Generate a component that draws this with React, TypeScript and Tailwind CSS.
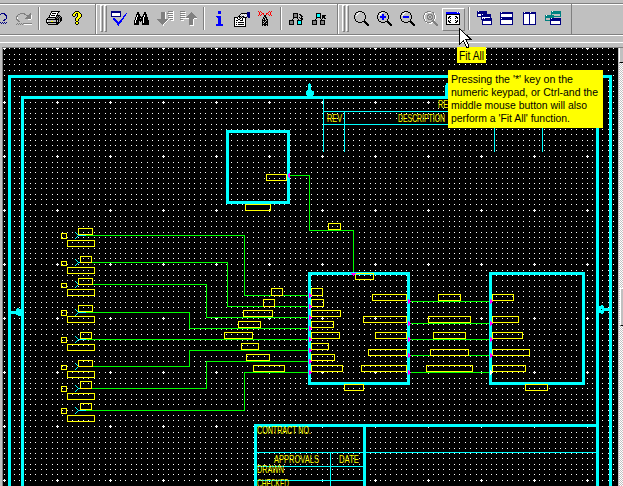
import React from "react";

type Box = [number, number, number, number];

const colours: Record<string, string> = {
  k: "#000000", w: "#ffffff", y: "#ffff00", g: "#808080", b: "#0000ff",
  n: "#000080", r: "#ff0000", c: "#00ffff", t: "#008080", s: "#c0c0c0",
};

function Pixels({ rows, x, y }: { rows: string[]; x: number; y: number }) {
  return (
    <>
      {rows.flatMap((row, j) =>
        [...row].map((p, i) =>
          p === "." ? null : <rect key={`${i}-${j}`} x={x + i} y={y + j} width="1" height="1" fill={colours[p]} />
        )
      )}
    </>
  );
}

function Icon({ rows, x, y, label, raised }: { rows: string[]; x: number; y: number; label: string; raised?: boolean }) {
  return (
    <button
      aria-label={label}
      className={
        raised
          ? "block h-[23px] w-[23px] shrink-0 border border-t-white border-l-white border-r-[#808080] border-b-[#808080]"
          : "block h-[23px] w-[23px] shrink-0"
      }
    >
      <svg className={raised ? "-m-px block h-[23px] w-[23px]" : "block h-[23px] w-[23px]"} viewBox="0 0 23 23" shapeRendering="crispEdges">
        <Pixels rows={rows} x={x} y={y} />
      </svg>
    </button>
  );
}

const undo = [
  "....nnnn..", "..nn...nn.", ".n......nn", ".........n", ".........n", ".........n", ".......nn.",
  "......nn..", "..........", ".n.n.n.n.n", "n.n.n.n.n.",
];
const redo = [
  "....ggggg.....g.", "..gg....gg...gg.", ".g........gggggw", "gg.........ggggw", "gw........gggggw", "gw.......ggggggw",
  "gg..........www.", ".gg.............", "..gg............", "................", ".g.g.g.ggggggggg", "g.g.g.g.wwwwwwww",
];
const printer = [
  ".....kkkkkkkkk..", ".....kwwwwwwk...", "....kwkkkkwk....", "....kwwwwwwk....", "...kwkkkkwkkkk..",
  "...kwwwwwwkgkgk.", "..kkkkkkkkgkgkgk", ".kssssssskkgkgkk", "kkkkkkkkkkkkkgkk", "kwsssssssskskgkk",
  "kwsssyysssksksk.", "kkkkkkkkkkkkkk..", ".ksssssssskkk...", "..kkkkkkkkkk....",
];
const question = [
  "...kkkk...", "..kyyyyk..", ".kyykkyyk.", "kyyk.kyyyk", "kyyk.kyyyk", ".kk..kyyyk", "....kyyyk.",
  "...kyyyk..", "...kyyk...", "...kyyk...", "....kk....", "...kyyk...", "...kyyk...", "....kk....",
];
const check = [
  "nnnnnnnnnn......", "nnnnnnnnnn......", "nwwwwwwwwn.....b", "nwwwwwwwwn....b.", "nwwwwwwwwn...bb.", "nnnnnnnnnn..bb..",
  "............b...", "..bb.......bb...", "..bbb.....bb....", "...bbb...bb.....", "....bbb.bbb.....", ".....bbbbb......",
  "......bbb.......", "......bb........", ".......b........",
];
const binoculars = [
  "...kk.....kk...", "...kk.....kk...", "..kkkk...kkkk..", "..kwkk...kwkk..", "..kwkkk.kkwkk..", ".kwkkkkkkwkkkk.",
  ".kwkkkskkwkkkk.", ".kwkkkkkkwkkkk.", "kwkkkkkkkwkkkkk", "kwkkk.k.kwkkkkk", "kwkkk...kwkkkkk", "kkkkk...kkkkkkk", "kkkkk...kkkkkkk",
];
const down = [
  "...........gggggw", "....ggggw...wwwww", "....ggggw.ggggggw", "....ggggw..wwwwww", "....ggggw..gggggw", "....ggggw...wwwww",
  "....ggggw..gggggw", "....ggggw...wwwww", "gggggggggggw.gggw", ".gggggggggw...www", "..gggggggw.......", "...gggggw........",
  "....gggw.........", ".....gw..........", "......w..........",
];
const up = [
  "ggggg............", ".wwwww.....g.....", "ggggg.....ggg....", ".wwwww...ggggg...", "ggggg...ggggggg..", ".wwwww.ggggggggg.",
  "ggggg.ggggggggggg", ".wwwwwwwwgggggwww", "ggg......ggggw...", ".www.....ggggw...", ".........ggggw...", ".........ggggw...",
  ".........ggggw...", ".........ggggw...", "..........wwww...",
];
const info = [
  "..bbb..", "..bbb..", "..bbb..", ".......", ".......", "bbbbb..", ".bbbb..", "..bbb..", "..bbb..", "..bbb..",
  "..bbb..", "..bbb..", "..bbb..", "bbbbbbb", "bbbbbbb",
];
const note = [
  ".............nnn", ".......kkkkkknnn", "......kw.w.w.nnn", ".....kw.w.w.wnnn", "....kkk.kk.w.nnn", "kkkkwk.k.kkkk.nn",
  "kwwkw.kwkwwk....", "kwwwkkwwkwwk....", "kwkkwwkkkwwk....", "kwwwwwwwwwwk....", "kwkwkkkkkkwk....", "kwwwwwwwwwwk....",
  "kwkwkkkkkkwk....", "kwwwwwwwwwwk....", "kkkkkkkkkkkk....",
];
const antenna = [
  "r.r........r.r", ".r.r......r.r.", ".r..rr..rr..r.", ".r.r.r..r.r.r.", "r.r...kk...r.r", "......kk......", ".....kskk.....",
  ".....kksk.....", "....kskskk....", "....kkkksk....", "....kskskk....", "....kkskkk....", "....kskksk....", "....kkkkkk....", "....k.kk.k....",
];
const treeDown = [
  "....kkkkk.....", "....kgggk.kk..", "....kgggk..kk.", "....kgggk...kk", "....kkkkk.k.k.", "....k...k..kkk", "...k.....k..kk",
  "kkkkk...kkkkk.", "kgggk...kccck.", "kgggk...kccck.", "kgggk...kccck.", "kkkkk...kkkkk.",
];
const treeUp = [
  "....kkkkk.....", "....kccck.....", "....kccck.kkkk", "....kccck.kkk.", "....kkkkk.kkk.", "....k...k.k.kk", "...k.....k....",
  "kkkkk...kkkkk.", "kgggk...kgggk.", "kgggk...kgggk.", "kgggk...kgggk.", "kkkkk...kkkkk.",
];
const lens = [
  "....kkkk.......", "..kk.w..kk.....", ".k.ww.....k....", ".k.w......k....", "k.w........k...", "k..........k...",
  "k..........k...", "k..........k...", ".k........k....", ".k........k....", "..kk....kkkk...", "....kkkk..kkk..",
  "...........kkk.", "............kkk", ".............kk",
];
function lensWith(mark: "plus" | "minus"): string[] {
  return lens.map((row, j) =>
    [...row].map((p, i) => {
      const bar = (j === 5 || j === 6) && i > 2 && i < 9;
      const stem = mark === "plus" && (i === 5 || i === 6) && j > 2 && j < 9;
      return bar || stem ? "b" : p;
    }).join("")
  );
}
const grayLens = [
  "....gggg.......", "..gg.www.gg....", ".gww......gw...", ".gw..gggg.gw...", "gw..gg..gg.gw..", "gw..g.gg.g.gw..",
  "gw..g.gg.g.gw..", "gw..gg..gg.gw..", ".gw..gggg.gw...", ".gw......ggw...", "..gg....gggg...", "...wggggwwggg..",
  "......www..ggg.", "............ggg", ".............gg",
];
const fit = [
  "bbbbbbbbbbbwbw", "bbbbbbbbbbbbbb", "kkkkkkkkkkkkkk", "kwwwwwwwwwwwwk", "kwwkkwwwwkkwwk", "kwkkwwwwwwkkwk", "kwkwkwwwwkwkwk",
  "kwwwwwwwwwwwwk", "kwkwkwwwwkwkwk", "kwkkwwwwwwkkwk", "kwwkkwwwwkkwwk", "kwwwwwwwwwwwwk", "kkkkkkkkkkkkkk",
];
const cascade = [
  "nwnnnnnnnn.....", "nnnnnnnnnn.....", "nnnnnnnnnn.....", "nwwwnwnnnnnnnn.", "nwwwnnnnnnnnnn.", "nnnnnnnnnnnnnn.",
  "....nwwwwwwwwn.", "....nwnwnnnnnnn", "....nnnnnnnnnnn", ".....nnnnnnnnnn", ".....nwwwwwwwwn", ".....nwwwwwwwwn", ".....nwwwwwwwwn", ".....nnnnnnnnnn",
];
const rowsIcon = [
  "nwnnnnnnnnnnn", "nnnnnnnnnnnnn", "nwwwwwwwwwwwn", "nwwwwwwwwwwwn", "nwwwwwwwwwwwn", "nnnnnnnnnnnnn",
  "nwnnnnnnnnnnn", "nnnnnnnnnnnnn", "nwwwwwwwwwwwn", "nwwwwwwwwwwwn", "nwwwwwwwwwwwn", "nwwwwwwwwwwwn", "nnnnnnnnnnnnn",
];
const colsIcon = [
  "nwnnnnnwnnnnn", "nnnnnnnnnnnnn", ...Array<string>(10).fill("nwwwwwnwwwwwn"), "nnnnnnnnnnnnn",
];
const swap = [
  "......twtttttttt", "......tttttttttt", "......tttttttttt", "......t........t", "twttttttt......t", "tttttttttttttttt",
  "ttttttttt.......", "t....nwnnnnnnnnn", "t....nnnnnnnnnnn", "tttttnnnnnnnnnnn", ".....nwwwwwwwwwn", ".....nwwwwwwwwwn", ".....nwwwwwwwwwn", ".....nnnnnnnnnnn",
];

function Divider() {
  return <div className="mx-[3px] mb-px h-[23px] w-[2px] shrink-0 border-l border-l-[#808080] bg-white" />;
}

function Grip() {
  return (
    <div className="flex h-[30px] w-3 shrink-0 gap-px border-l border-l-white pt-px pl-[3px]">
      {[0, 1].map((i) => (
        <div key={i} className="h-[27px] w-[3px] border border-t-white border-l-white border-r-[#808080] border-b-[#808080]" />
      ))}
    </div>
  );
}

function Toolbar() {
  return (
    <header className="h-[47px] shrink-0 bg-[#c0c0c0] pt-[3px]">
      <div className="flex h-8 items-center border-t border-b border-t-[#808080] border-b-[#808080] shadow-[inset_0_1px_0_#fff,0_1px_0_#fff]">
        <div className="flex h-[30px] w-[96px] shrink-0 items-center overflow-hidden border-r border-r-[#808080]">
          <div className="-ml-[11px] flex shrink-0 items-center">
            <Icon label="Undo" rows={undo} x={8} y={5} />
            <Icon label="Redo" rows={redo} x={4} y={5} />
            <Divider />
            <Icon label="Print" rows={printer} x={3} y={3} />
            <Icon label="Help" rows={question} x={6} y={3} />
          </div>
        </div>
        <div className="flex h-[30px] w-[242px] shrink-0 items-center border-r border-r-[#808080]">
          <Grip />
          <Icon label="Check" rows={check} x={3} y={3} />
          <Icon label="Find" rows={binoculars} x={3} y={4} />
          <Icon label="Push down" rows={down} x={3} y={3} />
          <Icon label="Pop up" rows={up} x={3} y={3} />
          <Divider />
          <Icon label="Information" rows={info} x={8} y={3} />
          <Icon label="Properties" rows={note} x={3} y={4} />
          <Icon label="Probe" rows={antenna} x={4} y={3} />
          <Divider />
          <Icon label="Descend" rows={treeDown} x={4} y={5} />
          <Icon label="Ascend" rows={treeUp} x={4} y={5} />
        </div>
        <div className="flex h-[30px] w-[234px] shrink-0 items-center border-r border-r-[#808080]">
          <Grip />
          <Icon label="Zoom" rows={lens} x={4} y={3} />
          <Icon label="Zoom in" rows={lensWith("plus")} x={4} y={3} />
          <Icon label="Zoom out" rows={lensWith("minus")} x={4} y={3} />
          <Icon label="Zoom selected" rows={grayLens} x={4} y={3} />
          <Icon label="Fit all" rows={fit} x={4} y={4} raised />
          <Divider />
          <Icon label="Cascade" rows={cascade} x={4} y={3} />
          <Icon label="Tile rows" rows={rowsIcon} x={4} y={4} />
          <Icon label="Tile columns" rows={colsIcon} x={4} y={4} />
          <Icon label="Swap windows" rows={swap} x={3} y={3} />
        </div>
      </div>
      <div className="mt-[7px] h-px bg-white" />
    </header>
  );
}

/* Each box is left, top, right, bottom; the right and bottom edges are exclusive. */
const labels: Box[] = [
  [266, 174, 287, 181], [245, 204, 271, 211], [328, 223, 341, 230],
  [271, 288, 283, 296], [263, 299, 275, 307], [243, 310, 273, 317], [238, 321, 261, 328],
  [224, 332, 253, 339], [241, 343, 259, 350], [246, 354, 270, 361], [253, 365, 285, 372],
  [311, 288, 323, 296], [311, 299, 324, 307], [311, 310, 341, 317], [311, 321, 334, 328],
  [311, 332, 340, 339], [311, 343, 329, 350], [311, 354, 335, 361], [311, 365, 343, 372],
  [355, 273, 374, 280], [344, 384, 364, 391],
  [372, 294, 407, 301], [363, 316, 407, 323], [375, 332, 407, 339], [368, 349, 407, 356], [361, 365, 407, 372],
  [438, 294, 461, 301], [428, 316, 471, 323], [433, 332, 466, 339], [430, 349, 469, 356], [426, 365, 473, 372],
  [492, 294, 514, 301], [492, 316, 519, 323], [492, 332, 523, 339], [492, 349, 530, 356], [492, 365, 526, 372],
  [525, 384, 548, 391],
];

/* y of the connector, wide upper tag, top and bottom of the tag, the pin square and the lower tag */
const connectors: [number, boolean, number, number, number, number, number][] = [
  [235, true, 228, 235, 233, 239, 240], [262, false, 256, 263, 261, 266, 267],
  [284, true, 278, 285, 283, 288, 289], [312, true, 305, 312, 310, 316, 316],
  [339, false, 332, 339, 337, 343, 344], [366, true, 360, 367, 365, 370, 371],
  [388, false, 381, 389, 386, 392, 393], [410, false, 403, 410, 408, 414, 415],
];
const bends = [244, 227, 206, 189, 0, 189, 206, 244];
const pinRows = [295, 306, 317, 328, 339, 350, 361, 372];
const busRows = [301, 323, 339, 355, 372];
const dotX = [0, 5, 10, 15, 21, 26, 31, 37, 42, 48];
const dotY = [0, 6, 11, 16, 22, 27, 32, 38, 43, 48];

function Outline({ box: [l, t, r, b], w = 1, stroke = "#ffff00" }: { box: Box; w?: number; stroke?: string }) {
  return <rect x={l + w / 2} y={t + w / 2} width={r - l - w} height={b - t - w} fill="none" stroke={stroke} strokeWidth={w} />;
}

function Label({ x, y, w, children }: { x: number; y: number; w: number; children: string }) {
  return (
    <text x={x} y={y} textLength={w} lengthAdjust="spacingAndGlyphs" fill="#ffff00" fontSize="10.5" fontFamily="'Liberation Sans', sans-serif">
      {children}
    </text>
  );
}

function Schematic() {
  return (
    <svg className="block h-[438px] w-[615px] shrink-0 bg-black" viewBox="3 48 615 438" shapeRendering="crispEdges">
      <defs>
        <pattern id="grid" x="3" y="47" width="53" height="54" patternUnits="userSpaceOnUse">
          {dotY.flatMap((dy) => dotX.map((dx) => <rect key={`${dx}-${dy}`} x={dx + 1} y={dy + 1} width="1" height="1" fill="#fff" />))}
          <path d="M0 1h3v1h-3zM1 0h1v3h-1z" fill="#fff" />
        </pattern>
      </defs>
      <rect x="3" y="48" width="615" height="438" fill="url(#grid)" />

      <g fill="none" stroke="#00ffff">
        <path strokeWidth="3" d="M9.5 486V76.5H610.5V486M22.5 486V97.5H597.5V486M255.5 486V425.5H597M364.5 425V486" />
        <path d="M323.5 98V152M344.5 111V152M494.5 111V152M542.5 111V152M323 111.5H597M323 124.5H597M257 452.5H597M257 466.5H364M257 480.5H364M330.5 452V486" />
      </g>
      <g fill="#00ffff">
        <path d="M309 83h1v1h1v6h1v1h2v4h-1v1h-2v1h-3v-1h-1v-1h-1v-4h1v-1h1v-6h1z" />
        <path d="M446 83h3v13h-3zM445 85h1v11h-1z" />
        <path d="M11 311h5v-2h1v-1h2v1h2v7h-3v-1h-2v-1h-5z" />
        <path d="M599 306h2v-1h2v1h1v2h6v3h-6v2h-1v1h-2v-1h-2z" />
      </g>
      <rect x="601" y="309" width="1" height="1" fill="#000" />

      <g fill="none" stroke="#00ff00">
        <path d="M290 175.5H309.5V230.5H353.5V274" />
        {connectors.map(([y], i) => (
          <path key={y} d={bends[i] ? `M85 ${y + 0.5}H${bends[i] + 0.5}V${pinRows[i] + 0.5}H309` : `M85 ${y + 0.5}H309`} />
        ))}
        {busRows.map((y) => <path key={y} d={`M410 ${y + 0.5}H490`} />)}
      </g>

      {connectors.map(([y, wide, top, bottom, s1, s2, low]) => (
        <g key={y}>
          <path fill="#00ffff" d={`M75 ${y - 3}h1v1h1v1h1v1h8v1h-8v1h-1v1h-1v1h-1v-1h1v-1h1v-1h1v-1h-1v-1h-1v-1h-1z`} />
          <Outline box={[wide ? 78 : 80, top, wide ? 93 : 92, bottom]} />
          <Outline box={[61, s1, 67, s2]} />
          <Outline box={[67, low, 95, low + 7]} />
        </g>
      ))}

      <Outline box={[226, 130, 290, 204]} w={3} stroke="#00ffff" />
      <Outline box={[308, 272, 410, 385]} w={3} stroke="#00ffff" />
      <Outline box={[489, 272, 585, 385]} w={3} stroke="#00ffff" />
      {labels.map((box) => <Outline key={box.join()} box={box} />)}

      <g fill="#ff00ff">
        {pinRows.map((y) => <path key={y} d={`M309 ${y - 2}h1v1h1v1h1v1h-1v1h-1v1h-1z`} />)}
        {busRows.map((y) => <path key={y} d={`M408 ${y - 2}h1v1h1v1h1v1h-1v1h-1v1h-1z`} />)}
        {busRows.map((y) => <path key={y} fill={y === 372 ? "#fff" : "#ff00ff"} d={`M490 ${y - 2}h1v1h1v1h1v1h-1v1h-1v1h-1z`} />)}
        <path d="M351 273h5v1h-1v1h-1v1h-1v-1h-1v-1h-1zM288 174h1v-1h1v5h-1v-1h-1z" />
      </g>

      <Label x={327} y={122} w={15}>REV</Label>
      <Label x={398} y={122} w={47}>DESCRIPTION</Label>
      <Label x={438} y={108} w={10}>RE</Label>
      <Label x={257} y={434} w={54}>CONTRACT  NO.</Label>
      <Label x={274} y={463} w={45}>APPROVALS</Label>
      <Label x={339} y={463} w={20}>DATE</Label>
      <Label x={257} y={473} w={27}>DRAWN</Label>
      <Label x={257} y={487} w={32}>CHECKED</Label>
    </svg>
  );
}

function Scrollbar() {
  return (
    <div className="flex h-full w-[5px] flex-col border-l border-l-[#c0c0c0] bg-[repeating-conic-gradient(#c0c0c0_0_25%,#fff_0_50%)] bg-[length:2px_2px]">
      <div className="h-[15px] border-b border-l border-b-black border-l-white bg-[#c0c0c0]" />
      <div className="mt-[225px] ml-px h-[38px] border-t border-b border-l border-t-white border-b-black border-l-white bg-[#c0c0c0]" />
    </div>
  );
}

const tip = [
  { text: "Pressing the '*' key on the", w: 122 },
  { text: "numeric keypad, or Ctrl-and the", w: 147 },
  { text: "middle mouse button will also", w: 136 },
  { text: "perform a 'Fit All' function.", w: 119 },
];

export default function App() {
  return (
    <div className="relative flex h-[486px] w-[623px] flex-col overflow-hidden bg-[#c0c0c0] font-['Liberation_Sans',sans-serif]">
      <Toolbar />
      <main className="ml-[2px] flex h-[439px] border-t border-l border-t-[#808080] border-l-[#808080]">
        <Schematic />
        <Scrollbar />
      </main>

      <div className="absolute top-[47px] left-[457px] h-4 w-[29px] bg-[#ffff00] pl-[2px]">
        <svg className="block h-4 w-[26px]" viewBox="0 0 26 16">
          <text x="0" y="13" fontSize="12" textLength="25" lengthAdjust="spacingAndGlyphs" fontFamily="'Liberation Sans', sans-serif">Fit All</text>
        </svg>
      </div>
      <div className="absolute top-[70px] left-[448px] h-[58px] w-[155px] bg-[#ffff00] pt-[3px] pl-[3px] text-black">
        {tip.map(({ text, w }) => (
          <svg key={text} className="block h-[13px] w-[150px] overflow-visible" viewBox="0 0 150 13">
            <text x="0" y="10" fontSize="11.5" textLength={w} lengthAdjust="spacingAndGlyphs" fontFamily="'Liberation Sans', sans-serif">{text}</text>
          </svg>
        ))}
      </div>
      <svg className="absolute top-[28px] left-[459px] h-[21px] w-[13px]" viewBox="0 0 13 21" shapeRendering="crispEdges">
        <path
          d="M.5 .5V16.5L4.5 12.5L7.5 19.5H9.5V17.5L7 11.5H12L.5 .5Z"
          fill="#fff"
          stroke="#000"
        />
      </svg>
    </div>
  );
}
